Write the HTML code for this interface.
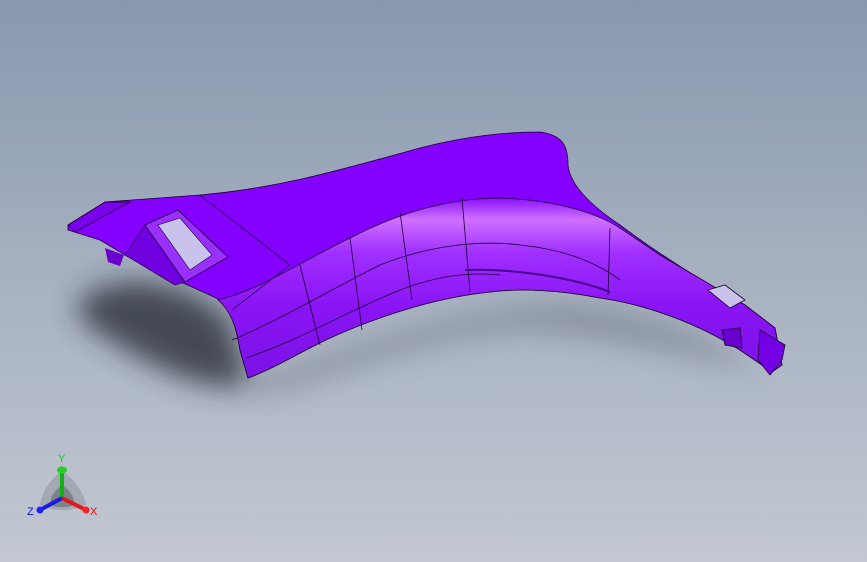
<!DOCTYPE html>
<html><head><style>
html,body{margin:0;padding:0}
body{width:867px;height:562px;overflow:hidden;background:linear-gradient(180deg,#8898ae 0%,#a4afbf 45%,#c3c8d2 100%);}
svg{position:absolute;left:0;top:0}
</style></head><body>
<svg width="867" height="562" viewBox="0 0 867 562">
<defs>
<filter id="bl" x="-50%" y="-50%" width="200%" height="200%"><feGaussianBlur stdDeviation="14"/></filter>
<linearGradient id="hl" x1="0" y1="0" x2="0" y2="1">
<stop offset="0" stop-color="#8a10ff"/><stop offset="0.12" stop-color="#d070ff"/><stop offset="0.3" stop-color="#a030ff"/><stop offset="0.6" stop-color="#8a14f4"/><stop offset="1" stop-color="#7a12e6"/>
</linearGradient>
</defs>
<path d="M95,290 C140,270 200,290 230,320 L250,385 C200,395 140,360 95,330 C70,315 75,298 95,290Z" fill="#2a2f38" opacity="0.8" filter="url(#bl)"/>
<path d="M250,380 C350,350 450,310 560,305 C640,310 700,330 760,370 C700,360 600,330 520,330 C420,335 330,380 260,395Z" fill="#6f7684" opacity="0.6" filter="url(#bl)"/>
<path d="M68,225 L105,202 L200,195 C280,188 340,170 420,148 C470,135 510,132 540,132 C562,135 568,145 568,165 C570,185 590,205 620,225 C660,255 700,280 745,305 L775,328 L782,365 L772,372 L740,350 C700,325 650,305 600,298 C560,290 520,288 490,292 C430,298 370,320 330,338 C300,352 275,368 248,378 L240,350 C236,325 230,310 220,300 C190,285 150,270 125,255 L100,240 L68,230Z" fill="#8400ff" stroke="#1a0030" stroke-width="0.8"/>
<path d="M218,300 C260,290 300,262 350,238 C400,212 450,198 500,198 C560,200 600,215 620,228 L660,255 L745,305 L775,328 L782,365 L772,372 L740,350 C700,325 650,305 600,298 C560,290 520,288 490,292 C430,298 370,320 330,338 C300,352 275,368 248,378 L240,350 C236,325 230,310 218,300Z" fill="url(#hl)" stroke="#1a0030" stroke-width="0.8"/>
<path d="M232,340 C280,320 330,290 380,265 C430,245 480,240 520,245 C570,250 600,265 620,280" fill="none" stroke="#1a0030" stroke-width="0.8"/>
<path d="M246,358 C300,340 350,310 400,290 C440,275 470,272 500,275" fill="none" stroke="#1a0030" stroke-width="0.8"/>
<path d="M350,238 L362,330 M400,212 L412,300 M462,198 L470,292 M610,228 L608,295 M300,265 L320,345" fill="none" stroke="#1a0030" stroke-width="0.8"/>
<path d="M465,270 C520,268 580,280 610,292" fill="none" stroke="#4a0090" stroke-width="2"/>
<path d="M68,225 L105,202 L130,202 L75,232Z" fill="#7a00ee" stroke="#1a0030" stroke-width="0.8"/>
<path d="M105,248 L108,262 L120,266 L124,255Z" fill="#6a00d0"/>
<path d="M125,255 L145,225 L185,282 L175,285Z" fill="#7000e0" stroke="#1a0030" stroke-width="0.6"/>
<path d="M145,225 L178,210 L228,257 L185,282Z" fill="#9a30ff" stroke="#1a0030" stroke-width="0.8"/>
<path d="M158,225 L180,218 L212,255 L190,270Z" fill="#c9c2ea" stroke="#1a0030" stroke-width="0.6"/>
<path d="M200,195 L290,265 M290,265 L232,310" fill="none" stroke="#1a0030" stroke-width="0.7"/>
<path d="M708,290 L725,285 L745,300 L730,308Z" fill="#c9c2ea" stroke="#1a0030" stroke-width="0.8"/>
<path d="M722,330 L740,328 L742,348 L725,345Z" fill="#6a00d0" stroke="#1a0030" stroke-width="0.8"/>
<path d="M760,330 L785,345 L782,360 L770,375 L758,360Z" fill="#7400e4" stroke="#1a0030" stroke-width="0.8"/>
<path d="M62,470 C75,480 85,495 86,505 C70,512 55,512 40,505 C42,492 50,480 62,470Z" fill="#8a8f98" opacity="0.5"/>
<path d="M62,485 C70,490 75,498 74,505 C66,508 58,508 50,505 C50,497 55,490 62,485Z" fill="#555a62" opacity="0.5"/>
<line x1="62" y1="498" x2="62" y2="470" stroke="#12b012" stroke-width="4"/>
<ellipse cx="62" cy="470" rx="5" ry="3.5" fill="#22d022"/>
<line x1="62" y1="498" x2="86" y2="510" stroke="#e01818" stroke-width="4"/>
<circle cx="86" cy="510" r="3.5" fill="#ff2020"/>
<line x1="62" y1="498" x2="40" y2="510" stroke="#1a1ae0" stroke-width="4"/>
<circle cx="40" cy="510" r="3.5" fill="#2020ff"/>
<text x="58" y="462" font-family="Liberation Sans,sans-serif" font-size="11" fill="#10d010">Y</text>
<text x="90" y="515" font-family="Liberation Sans,sans-serif" font-size="11" fill="#e01010">X</text>
<text x="27" y="515" font-family="Liberation Sans,sans-serif" font-size="11" fill="#1010e0">Z</text>
</svg>
</body></html>
